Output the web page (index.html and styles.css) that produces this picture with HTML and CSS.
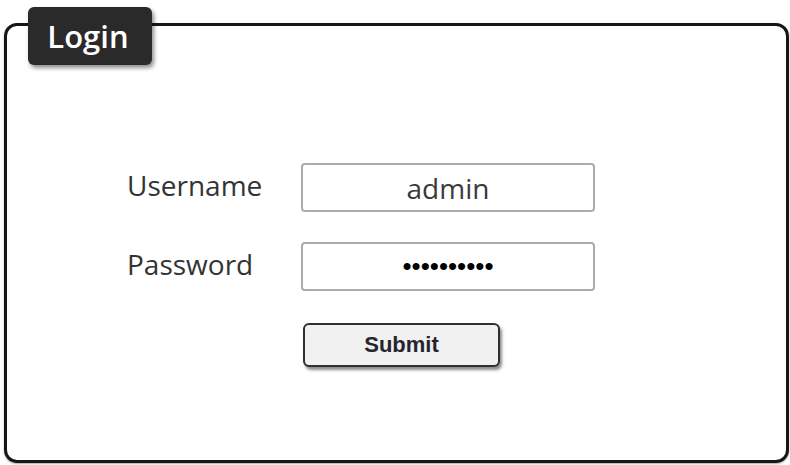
FILE: index.html
```html
<!DOCTYPE html>
<html>
<head>
    <title>Login</title>
    <link rel="stylesheet" href="styles.css">
</head>
<body>
    <div class="page">
        <div class="panel">
            <div class="tab">Login</div>

            <form class="login-form" onsubmit="return false;">
                <label for="username">Username</label>
                <input type="text" id="username" value="admin">

                <label for="password">Password</label>
                <input type="password" id="password" value="adminadmin">

                <button type="submit" class="submit-btn">Submit</button>
            </form>
        </div>
    </div>
</body>
</html>
```

FILE: styles.css
```css
/* Reset some default styles */
body {
    font-family: "Open Sans", "DejaVu Sans", sans-serif;
    margin: 0;
    padding: 0;
    background-color: #fff;
}

/* Outer spacing around the panel */
.page {
    padding: 23px 1px 2px 4px;
}

/* Rounded frame holding the form */
.panel {
    position: relative;
    height: 440px;
    box-sizing: border-box;
    border: 3px solid #161616;
    border-radius: 13px;
    box-shadow: 0 1px 2px rgba(0, 0, 0, 0.35);
    padding: 137px 0 0 120px;
}

/* Dark title tab sitting on the top border */
.tab {
    position: absolute;
    left: 21px;
    top: -19px;
    width: 124px;
    height: 58px;
    box-sizing: border-box;
    background-color: #2b2a2b;
    border-radius: 6px;
    box-shadow: 2px 3px 4px rgba(0, 0, 0, 0.45);
    color: #fff;
    font-size: 31px;
    font-weight: 600;
    line-height: 58px;
    text-align: center;
    padding-right: 4px;
}

/* Label / field grid */
.login-form {
    display: grid;
    grid-template-columns: 174px 294px;
    row-gap: 30px;
}

.login-form label {
    align-self: center;
    font-size: 28px;
    color: #333;
    margin-bottom: 6px;
}

.login-form input {
    height: 49px;
    box-sizing: border-box;
    border: 2px solid #ababab;
    border-radius: 4px;
    padding: 0;
    font-family: "Open Sans", sans-serif;
    font-size: 28px;
    color: #3a3a3a;
    text-align: center;
    outline: none;
}

.login-form input[type="password"] {
    font-family: "Liberation Sans", sans-serif;
    font-size: 26px;
    letter-spacing: 0;
    color: #000;
}

/* Submit button */
.submit-btn {
    grid-column: 2;
    width: 197px;
    height: 44px;
    margin: 2px 0 0 2px;
    border: 2px solid #303030;
    border-radius: 6px;
    background-color: #f1f1f1;
    box-shadow: 2px 3px 3px rgba(0, 0, 0, 0.45);
    font-family: "Liberation Sans", Arial, sans-serif;
    font-size: 22px;
    font-weight: bold;
    color: #252530;
    cursor: pointer;
}
```
